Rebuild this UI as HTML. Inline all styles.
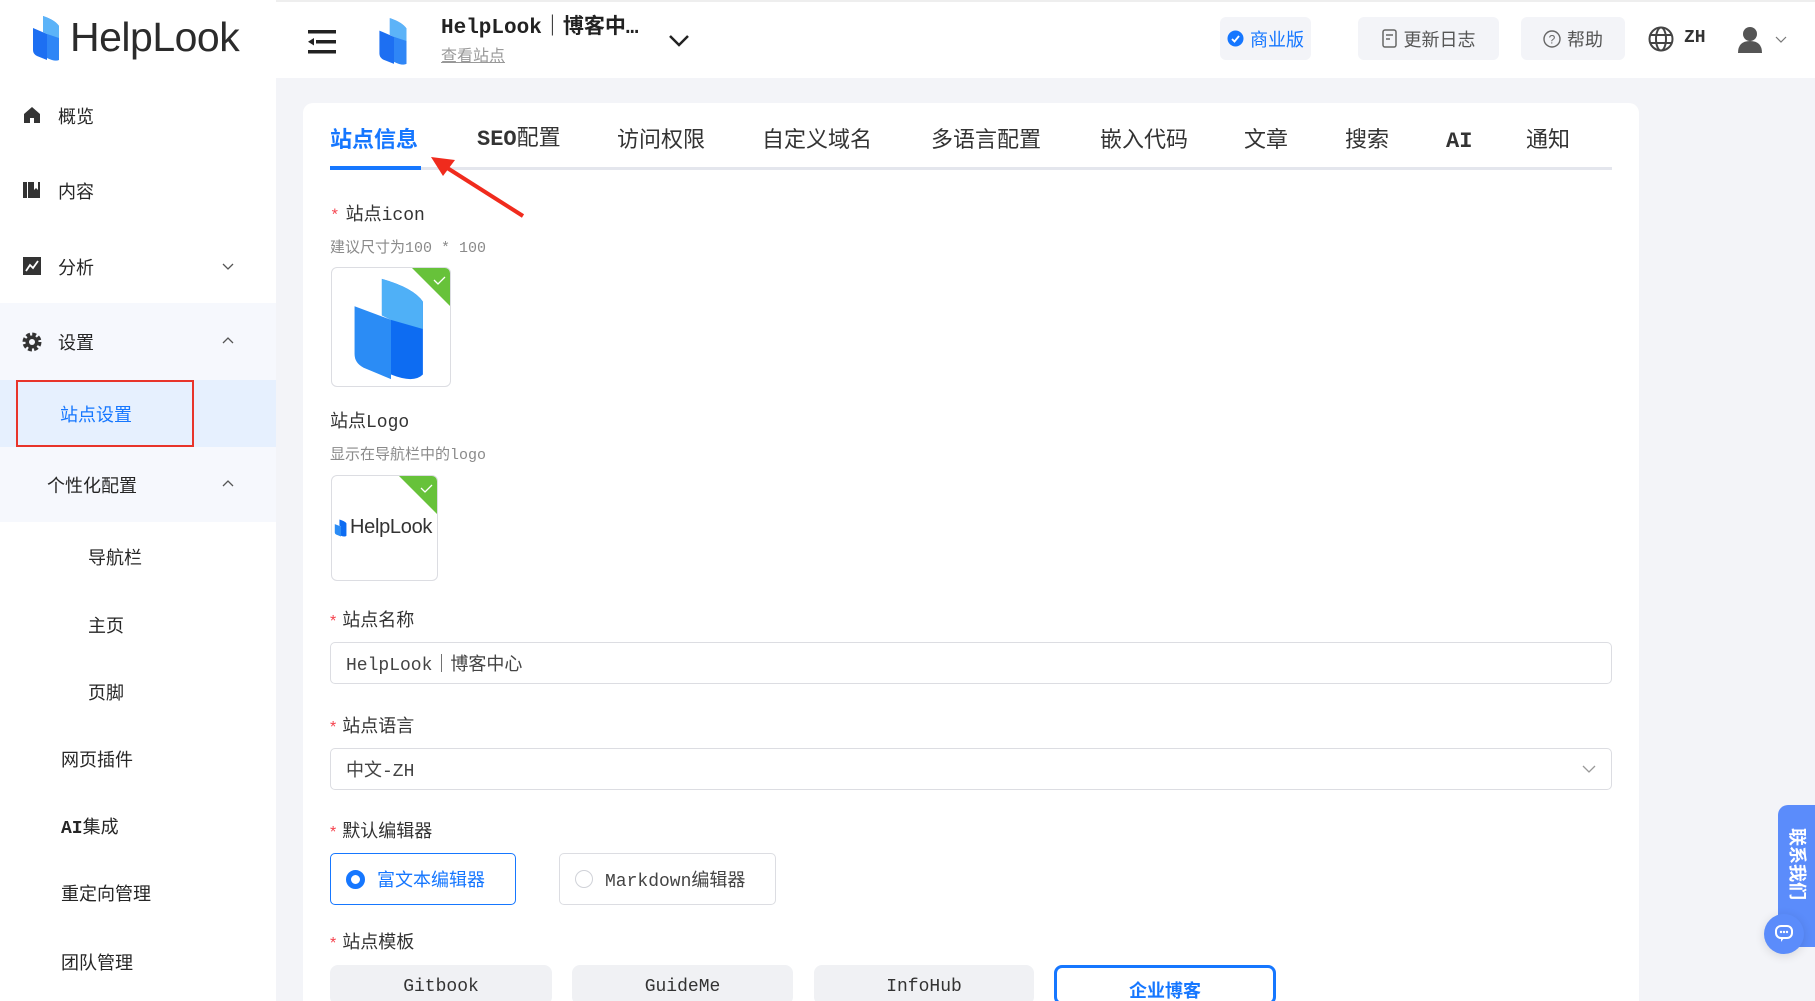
<!DOCTYPE html>
<html style="overflow:hidden;height:1001px"><head><meta charset="utf-8"><style>
*{margin:0;padding:0;box-sizing:border-box}
html,body{overflow:hidden}
body{width:1815px;height:1001px;background:#f3f4f8;font-family:"Liberation Sans","Noto Sans CJK SC",sans-serif;color:#262626;position:relative}
.a{position:absolute;white-space:nowrap}
.mono{font-family:"Liberation Mono","Noto Sans CJK SC",monospace}
.side{position:absolute;left:0;top:0;width:276px;height:1001px;background:#fff}
.hdr{position:absolute;left:276px;top:0;width:1539px;height:78px;background:#fff;border-top:2px solid #eee}
.si{font-size:18px;color:#262626}
.btn{position:absolute;top:17px;height:43px;border-radius:6px;background:#f3f4f8;font-size:18px;color:#555;display:flex;align-items:center;justify-content:center;gap:6px}
.card{position:absolute;left:303px;top:103px;width:1336px;height:898px;background:#fff;border-radius:10px 10px 0 0}
.tab{position:absolute;top:125px;font-size:22px;line-height:30px;color:#333}
.lbl{font-size:18px;color:#333}
.lbl b{color:#f5424d;font-weight:normal;margin-right:6px;font-size:16px}
.hint{font-size:15px;color:#8a8a8a}
.inp{position:absolute;left:330px;width:1282px;height:42px;border:1px solid #dcdde2;border-radius:5px;font-size:18px;color:#444;padding-left:15px;display:flex;align-items:center}
.tpl{position:absolute;top:965px;height:40px;background:#f0f1f4;border-radius:8px;font-size:18px;color:#333;display:flex;justify-content:center;padding-top:12px}
</style></head><body>
<div class="side">
 <svg class="a" style="left:29px;top:14px" width="36" height="48" viewBox="0 0 36 48"><path d="M4 14 L18 20 L18 46 L8 42 Q4 40 4 36Z" fill="#1d6ff2"/><path d="M14 2 Q26 6 30 12 L30 46 Q26 48 18 44 L18 20 L14 18Z" fill="#2f86f6"/><path d="M14 2 L14 18 L18 20 L30 24 L30 12 Q26 6 14 2Z" fill="#5cb3f8"/></svg>
 <div class="a" style="left:70px;top:14px;font-size:41px;color:#2b2b2b;letter-spacing:-0.5px">HelpLook</div>
 <svg class="a" style="left:22px;top:105px" width="20" height="20" viewBox="0 0 20 20"><path d="M2 9 L10 2 L18 9 L18 18 L12 18 L12 13 L8 13 L8 18 L2 18Z" fill="#333"/></svg>
 <div class="a si" style="left:58px;top:103px">概览</div>
 <svg class="a" style="left:22px;top:180px" width="20" height="20" viewBox="0 0 20 20"><rect x="1" y="2" width="4" height="16" fill="#333"/><rect x="6" y="2" width="12" height="16" fill="#333"/><path d="M12 2 L12 10 L14 8 L16 10 L16 2Z" fill="#fff"/></svg>
 <div class="a si" style="left:58px;top:178px">内容</div>
 <svg class="a" style="left:22px;top:256px" width="20" height="20" viewBox="0 0 20 20"><rect x="1" y="1" width="18" height="18" fill="#333"/><path d="M4 15 L8 9 L11 12 L16 5" stroke="#fff" stroke-width="1.8" fill="none"/></svg>
 <div class="a si" style="left:58px;top:254px">分析</div>
 <svg class="a" style="left:222px;top:263px" width="12" height="8"><path d="M1 1 L6 6 L11 1" stroke="#555" fill="none" stroke-width="1.3"/></svg>
 <div class="a" style="left:0;top:303px;width:276px;height:219px;background:#f6f8fd"></div>
 <svg class="a" style="left:20px;top:330px" width="24" height="24" viewBox="0 0 24 24"><circle cx="12" cy="12" r="7" fill="none" stroke="#333" stroke-width="5" stroke-dasharray="3.5 2"/><circle cx="12" cy="12" r="6.5" fill="#333"/><circle cx="12" cy="12" r="3" fill="#f6f8fd"/></svg>
 <div class="a si" style="left:58px;top:329px">设置</div>
 <svg class="a" style="left:222px;top:336px" width="12" height="8"><path d="M1 7 L6 2 L11 7" stroke="#555" fill="none" stroke-width="1.3"/></svg>
 <div class="a" style="left:0;top:380px;width:276px;height:67px;background:#e6f0fe"></div>
 <div class="a" style="left:16px;top:380px;width:178px;height:67px;border:2px solid #e8342a"></div>
 <div class="a si" style="left:60px;top:401px;color:#1677ff">站点设置</div>
 <div class="a si" style="left:47px;top:472px">个性化配置</div>
 <svg class="a" style="left:222px;top:479px" width="12" height="8"><path d="M1 7 L6 2 L11 7" stroke="#555" fill="none" stroke-width="1.3"/></svg>
 <div class="a si" style="left:88px;top:544px">导航栏</div>
 <div class="a si" style="left:88px;top:612px">主页</div>
 <div class="a si" style="left:88px;top:679px">页脚</div>
 <div class="a si" style="left:61px;top:746px">网页插件</div>
 <div class="a si" style="left:61px;top:813px"><span class="mono" style="font-weight:bold">AI</span>集成</div>
 <div class="a si" style="left:61px;top:880px">重定向管理</div>
 <div class="a si" style="left:61px;top:949px">团队管理</div>
</div>
<div class="hdr">
 <svg class="a" style="left:32px;top:28px" width="28" height="24" viewBox="0 0 28 24"><rect x="0" y="0" width="28" height="3.5" fill="#222"/><rect x="8" y="10" width="20" height="3.5" fill="#222"/><rect x="0" y="20" width="28" height="3.5" fill="#222"/><path d="M0 11.7 L6 8 L6 15.5Z" fill="#222"/></svg>
 <svg class="a" style="left:98px;top:14px" width="40" height="50" viewBox="0 0 36 48"><path d="M4 14 L18 20 L18 46 L8 42 Q4 40 4 36Z" fill="#1d6ff2"/><path d="M14 2 Q26 6 30 12 L30 46 Q26 48 18 44 L18 20 L14 18Z" fill="#2f86f6"/><path d="M14 2 L14 18 L18 20 L30 24 L30 12 Q26 6 14 2Z" fill="#5cb3f8"/></svg>
 <div class="a mono" style="left:165px;top:8px;font-size:21px;font-weight:bold;color:#222">HelpLook｜博客中…</div>
 <div class="a" style="left:165px;top:40px;font-size:16px;color:#999;text-decoration:underline">查看站点</div>
 <svg class="a" style="left:392px;top:32px" width="22" height="14"><path d="M2 2 L11 11 L20 2" stroke="#222" stroke-width="2.5" fill="none"/></svg>
</div>
<div class="btn" style="left:1220px;width:91px;color:#1677ff"><svg width="17" height="17"><circle cx="8.5" cy="8.5" r="8" fill="#1677ff"/><path d="M5 9 L7.5 11.5 L12 6" stroke="#fff" stroke-width="1.8" fill="none"/></svg>商业版</div>
<div class="btn" style="left:1358px;width:141px"><svg width="16" height="20"><rect x="1" y="1" width="13" height="17" rx="2" fill="none" stroke="#666" stroke-width="1.5"/><path d="M4 6 H11 M4 10 H8" stroke="#666" stroke-width="1.5"/></svg>更新日志</div>
<div class="btn" style="left:1521px;width:104px"><svg width="18" height="18"><circle cx="9" cy="9" r="8" fill="none" stroke="#666" stroke-width="1.4"/><text x="9" y="13.5" font-size="12" text-anchor="middle" fill="#666" font-family="Liberation Sans">?</text></svg>帮助</div>
<svg class="a" style="left:1648px;top:26px" width="26" height="26" viewBox="0 0 26 26"><circle cx="13" cy="13" r="11.5" fill="none" stroke="#444" stroke-width="2"/><ellipse cx="13" cy="13" rx="5" ry="11.5" fill="none" stroke="#444" stroke-width="2"/><path d="M2 9 H24 M2 17 H24" stroke="#444" stroke-width="2"/></svg>
<div class="a mono" style="left:1684px;top:28px;font-size:18px;font-weight:bold;color:#333">ZH</div>
<svg class="a" style="left:1737px;top:26px" width="26" height="28"><circle cx="13" cy="8" r="7" fill="#555"/><path d="M1 27 Q1 15 13 15 Q25 15 25 27Z" fill="#555"/></svg>
<svg class="a" style="left:1775px;top:36px" width="12" height="8"><path d="M1 1 L6 6 L11 1" stroke="#777" fill="none" stroke-width="1.2"/></svg>

<div class="card"></div>
<div class="a" style="left:330px;top:167px;width:1282px;height:3px;background:#e4e6ed"></div>
<div class="a" style="left:330px;top:166px;width:91px;height:4px;background:#1677ff"></div>
<div class="tab" style="left:330px;color:#1677ff;font-weight:bold">站点信息</div>
<div class="tab mono" style="left:477px;font-weight:bold">SEO<span style="font-weight:normal">配置</span></div>
<div class="tab" style="left:617px">访问权限</div>
<div class="tab" style="left:762px">自定义域名</div>
<div class="tab" style="left:931px">多语言配置</div>
<div class="tab" style="left:1100px">嵌入代码</div>
<div class="tab" style="left:1244px">文章</div>
<div class="tab" style="left:1345px">搜索</div>
<div class="tab mono" style="left:1446px;font-weight:bold;top:127px">AI</div>
<div class="tab" style="left:1526px">通知</div>
<svg class="a" style="left:425px;top:150px" width="102" height="70"><path d="M98 66 L16 14" stroke="#f02b1d" stroke-width="4"/><path d="M6 7 L30 10 L18 26Z" fill="#f02b1d"/></svg>

<div class="a lbl mono" style="left:330px;top:200px"><b>*</b>站点icon</div>
<div class="a hint mono" style="left:330px;top:236px">建议尺寸为100 * 100</div>
<div class="a" style="left:331px;top:267px;width:120px;height:120px;border:1px solid #dcdde2;border-radius:6px;overflow:hidden">
 <svg class="a" style="left:18px;top:5px" width="82" height="112" viewBox="0 0 36 48"><path d="M2 14 L18 20 L18 46 L6 41 Q2 39 2 35Z" fill="#2b8cf5"/><path d="M14 2 Q28 6 32 12 L32 44 Q28 48 18 44 L18 20 L14 18Z" fill="#0d6cf2"/><path d="M14 2 L14 18 L18 20 L32 24 L32 12 Q28 6 14 2Z" fill="#4fb0f7"/></svg>
 <svg class="a" style="left:80px;top:0" width="40" height="40"><path d="M0 0 H40 V40Z" fill="#67c23a"/><path d="M22 12 L26 16 L33 9" stroke="#fff" fill="none" stroke-width="1.3"/></svg>
</div>
<div class="a lbl mono" style="left:330px;top:407px">站点Logo</div>
<div class="a hint mono" style="left:330px;top:443px">显示在导航栏中的logo</div>
<div class="a" style="left:331px;top:475px;width:107px;height:106px;border:1px solid #dcdde2;border-radius:6px;overflow:hidden">
 <svg class="a" style="left:2px;top:41px" width="14" height="22" viewBox="0 0 36 48"><path d="M2 14 L18 20 L18 46 L6 41 Q2 39 2 35Z" fill="#2b8cf5"/><path d="M14 2 Q28 6 32 12 L32 44 Q28 48 18 44 L18 20 L14 18Z" fill="#0d6cf2"/></svg>
 <div class="a" style="left:18px;top:40px;font-size:20px;color:#333;letter-spacing:-0.3px">HelpLook</div>
 <svg class="a" style="left:67px;top:0" width="40" height="40"><path d="M0 0 H40 V40Z" fill="#67c23a"/><path d="M22 12 L26 16 L33 9" stroke="#fff" fill="none" stroke-width="1.3"/></svg>
</div>
<div class="a lbl" style="left:330px;top:606px"><b>*</b>站点名称</div>
<div class="inp mono" style="top:642px">HelpLook｜博客中心</div>
<div class="a lbl" style="left:330px;top:712px"><b>*</b>站点语言</div>
<div class="inp mono" style="top:748px">中文-ZH</div>
<svg class="a" style="left:1582px;top:765px" width="14" height="8"><path d="M1 1 L7 7 L13 1" stroke="#999" fill="none" stroke-width="1.3"/></svg>
<div class="a lbl" style="left:330px;top:817px"><b>*</b>默认编辑器</div>
<div class="a" style="left:330px;top:853px;width:186px;height:52px;border:1.5px solid #1677ff;border-radius:5px"></div>
<div class="a" style="left:346px;top:870px;width:19px;height:19px;border-radius:50%;border:5px solid #1677ff;background:#fff"></div>
<div class="a" style="left:377px;top:866px;font-size:18px;color:#1677ff">富文本编辑器</div>
<div class="a" style="left:559px;top:853px;width:217px;height:52px;border:1px solid #dcdde2;border-radius:5px"></div>
<div class="a" style="left:575px;top:870px;width:18px;height:18px;border-radius:50%;border:1px solid #d0d2d8"></div>
<div class="a mono" style="left:605px;top:866px;font-size:18px;color:#444">Markdown编辑器</div>
<div class="a lbl" style="left:330px;top:928px"><b>*</b>站点模板</div>
<div class="tpl mono" style="left:330px;width:222px">Gitbook</div>
<div class="tpl mono" style="left:572px;width:221px">GuideMe</div>
<div class="tpl mono" style="left:814px;width:220px">InfoHub</div>
<div class="tpl" style="left:1054px;width:222px;background:#fff;border:3px solid #1677ff;color:#1677ff;font-weight:bold;padding-top:9px">企业博客</div>

<div class="a" style="left:1778px;top:805px;width:40px;height:142px;background:#5b8cfb;border-radius:10px 0 0 10px"></div>
<div class="a" style="left:1786px;top:828px;font-size:18px;line-height:22px;color:#fff;font-weight:bold;writing-mode:vertical-rl;text-orientation:sideways">联系我们</div>
<div class="a" style="left:1764px;top:914px;width:40px;height:40px;border-radius:50%;background:#5b8cfb;box-shadow:0 2px 10px rgba(0,0,0,.12)"></div>
<svg class="a" style="left:1774px;top:923px" width="20" height="20"><rect x="2" y="3" width="16" height="12" rx="5" fill="none" stroke="#fff" stroke-width="2"/><circle cx="7" cy="9" r="1.2" fill="#fff"/><circle cx="10" cy="9" r="1.2" fill="#fff"/><circle cx="13" cy="9" r="1.2" fill="#fff"/><path d="M7 15 L7 19 L10 15" fill="#fff"/></svg>
</body></html>
